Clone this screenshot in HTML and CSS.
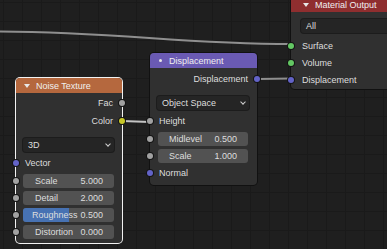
FILE: index.html
```html
<!DOCTYPE html>
<html lang="en">
<head>
    <meta charset="UTF-8">
    <title>Node Editor</title>
    <link rel="stylesheet" href="styles.css">
</head>
<body>
    <div class="editor">
        <svg class="links" width="387" height="249" viewBox="0 0 387 249">
            <path d="M0 31.5 C 120 32, 180 44, 292 44" class="link"/>
            <path d="M122 121 L150 122" class="link link-light"/>
            <path d="M258 79 L291 78.5" class="link"/>
        </svg>

        <!-- Material Output -->
        <div class="node node-output">
            <div class="node-header header-red">
                <span class="collapse"></span>Material Output
            </div>
            <div class="node-body">
                <div class="dropdown dd-output"><span>All</span><span class="chev"></span></div>
                <div class="row row-in r17 first-socket"><span class="socket s-green"></span>Surface</div>
                <div class="row row-in r17"><span class="socket s-green"></span>Volume</div>
                <div class="row row-in r17"><span class="socket s-purple"></span>Displacement</div>
            </div>
        </div>

        <!-- Displacement -->
        <div class="node node-disp">
            <div class="node-header header-purple">
                <span class="collapse dot"></span>Displacement
            </div>
            <div class="node-body">
                <div class="row row-out"><span class="socket s-purple"></span>Displacement</div>
                <div class="dropdown dd-disp"><span>Object Space</span><span class="chev"></span></div>
                <div class="row row-in height-row"><span class="socket s-gray"></span>Height</div>
                <div class="row field-row"><span class="socket s-gray"></span>
                    <div class="field"><span>Midlevel</span><span>0.500</span></div>
                </div>
                <div class="row field-row"><span class="socket s-gray"></span>
                    <div class="field"><span>Scale</span><span>1.000</span></div>
                </div>
                <div class="row row-in"><span class="socket s-purple"></span>Normal</div>
            </div>
        </div>

        <!-- Noise Texture -->
        <div class="node node-noise selected">
            <div class="node-header header-orange">
                <span class="collapse"></span>Noise Texture
            </div>
            <div class="node-body">
                <div class="row row-out"><span class="socket s-gray"></span>Fac</div>
                <div class="row row-out"><span class="socket s-yellow"></span>Color</div>
                <div class="dropdown dd-noise"><span>3D</span><span class="chev"></span></div>
                <div class="row row-in vector-row"><span class="socket s-purple"></span>Vector</div>
                <div class="row field-row"><span class="socket s-gray"></span>
                    <div class="field"><span>Scale</span><span>5.000</span></div>
                </div>
                <div class="row field-row"><span class="socket s-gray"></span>
                    <div class="field"><span>Detail</span><span>2.000</span></div>
                </div>
                <div class="row field-row"><span class="socket s-gray"></span>
                    <div class="field"><span class="fill" style="width: 50%"></span><span class="lbl-tight">Roughness</span><span>0.500</span></div>
                </div>
                <div class="row field-row"><span class="socket s-gray"></span>
                    <div class="field"><span>Distortion</span><span>0.000</span></div>
                </div>
            </div>
        </div>
    </div>
</body>
</html>
```

FILE: styles.css
```css
body {
    margin: 0;
    background-color: #1e1e1e;
    font-family: "Liberation Sans", Arial, sans-serif;
    font-size: 9px;
    color: #dedede;
}
.editor {
    position: relative;
    width: 387px;
    height: 249px;
    overflow: hidden;
    background-color: #1f1f1f;
    background-image:
        linear-gradient(to right, #1a1a1a 1px, transparent 1px),
        linear-gradient(to bottom, #1a1a1a 1px, transparent 1px);
    background-size: 19px 19px;
    background-position: 3px 2px;
}
.links {
    position: absolute;
    left: 0;
    top: 0;
}
.link {
    fill: none;
    stroke: #8f8f8f;
    stroke-width: 2;
}
.link-light {
    stroke: #c4c4c4;
}

/* nodes */
.node {
    position: absolute;
    background-color: #303030;
    border-radius: 4px;
    box-shadow: 0 0 0 1px #111;
}
.node.selected {
    box-shadow: 0 0 0 1px #f2f2f2;
}
.node-noise {
    left: 16px;
    top: 78px;
    width: 106px;
    padding-bottom: 3px;
}
.node-disp {
    left: 150px;
    top: 53px;
    width: 107px;
    padding-bottom: 3px;
}
.node-output {
    left: 291px;
    top: -3px;
    width: 130px;
    padding-bottom: 1px;
}
.node-header {
    height: 15px;
    display: flex;
    align-items: center;
    padding-left: 7px;
    border-radius: 4px 4px 0 0;
    color: #f0f0f0;
}
.header-orange { background-color: #b5683e; }
.header-purple { background-color: #6a5ab3; }
.header-red { background-color: #8f2e2f; }
.collapse {
    width: 0;
    height: 0;
    border-left: 3px solid transparent;
    border-right: 3px solid transparent;
    border-top: 4px solid #e8e8e8;
    margin-right: 6px;
    margin-left: 1px;
}
.node-output .collapse { margin-left: 5px; }
.collapse.dot {
    width: 3px;
    height: 3px;
    border: none;
    border-radius: 50%;
    background-color: #e8e8e8;
    margin-left: 2px;
    margin-right: 7px;
}
.node-body {
    display: flex;
    flex-direction: column;
    padding-top: 1px;
}
.node-disp .node-body { padding-top: 2px; }

/* rows and sockets */
.row {
    position: relative;
    height: 18px;
    display: flex;
    align-items: center;
}
.r17 { height: 17px; }
.row-in { padding-left: 9px; }
.row-out {
    justify-content: flex-end;
    padding-right: 9px;
}
.field-row { height: 17px; }
.vector-row { margin-top: 2px; }
.height-row { margin-top: 2px; }
.node-output .row-in { padding-left: 11px; }
.first-socket { margin-top: 4px; }
.socket {
    position: absolute;
    left: -3px;
    top: 50%;
    width: 6px;
    height: 6px;
    margin-top: -3px;
    border-radius: 50%;
    box-shadow: 0 0 0 1px #141414;
}
.row-out .socket {
    left: auto;
    right: -3px;
}
.s-gray { background-color: #a1a1a1; }
.s-yellow { background-color: #c7c729; }
.s-purple { background-color: #6363c7; }
.s-green { background-color: #63c763; }

/* widgets */
.dropdown {
    height: 14px;
    margin: 0 8px 0 7px;
    background-color: #252525;
    border-radius: 3px;
    display: flex;
    align-items: center;
    justify-content: space-between;
    padding: 0 4px 0 5px;
    box-shadow: 0 0 0 1px #1c1c1c;
}
.dd-noise { margin-top: 8px; }
.dd-disp { margin-top: 8px; }
.dd-output { margin-top: 6px; margin-left: 10px; }
.chev {
    width: 3px;
    height: 3px;
    border-right: 1px solid #d0d0d0;
    border-bottom: 1px solid #d0d0d0;
    transform: rotate(45deg);
    margin-top: -3px;
}
.field {
    position: relative;
    flex: 1;
    height: 14px;
    margin: 0 8px 0 7px;
    background-color: #525252;
    border-radius: 3px;
    overflow: hidden;
    display: flex;
    align-items: center;
    justify-content: space-between;
    padding: 0 11px 0 12px;
}
.node-disp .field { margin: 0 9px 0 8px; padding: 0 11px 0 11px; }
.field span {
    position: relative;
}
.field .fill {
    position: absolute;
    left: 0;
    top: 0;
    bottom: 0;
    background-color: #4772b3;
}
.lbl-tight { margin-left: -3px; }
```
